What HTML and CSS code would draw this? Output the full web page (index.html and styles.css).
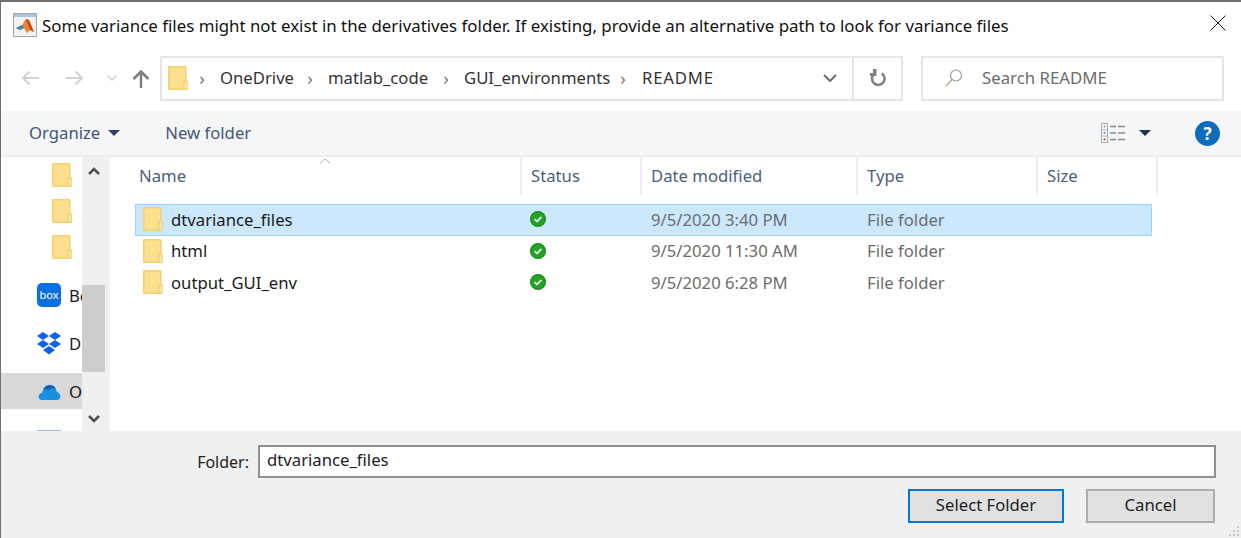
FILE: index.html
```html
<!DOCTYPE html>
<html lang="en">
<head>
    <meta charset="UTF-8">
    <title>Select Folder</title>
    <link rel="stylesheet" href="styles.css">
</head>
<body>
    <svg class="defs" width="0" height="0">
        <symbol id="folder" viewBox="0 0 20 24">
            <rect x="0.75" y="0.75" width="17" height="22.5" rx="0.5" fill="#fde08f" stroke="#f5cf6b" stroke-width="1.5"/>
            <rect x="16" y="15" width="3.2" height="8.2" fill="#fde9ad" stroke="#f0c95f"/>
        </symbol>
        <symbol id="ok" viewBox="0 0 16 16">
            <circle cx="8" cy="8" r="8" fill="#25a325"/>
            <circle cx="8" cy="8" r="7.2" fill="none" stroke="#1a8a1f" stroke-width="1"/>
            <path d="M4.6 8.2 7 10.4 11.4 6" fill="none" stroke="#fff" stroke-width="1.6"/>
        </symbol>
    </svg>

    <div class="window">
        <div class="titlebar">
            <svg class="app-icon" width="24" height="24" viewBox="0 0 24 24">
                <rect x="0.5" y="0.5" width="23" height="23" fill="#f2f2f2" stroke="#a6a6a6"/>
                <rect x="1" y="1" width="22" height="3" fill="#a9c4e0"/>
                <path d="M3 15 9 12 13 6 16 7 21 19 17 17 14 20 11 15 7 17Z" fill="#e8832a"/>
                <path d="M3 15 9 12 11 15 7 17Z" fill="#3f86c8"/>
                <path d="M13 6 16 7 21 19 17 17Z" fill="#c9491f"/>
            </svg>
            <span class="title">Some variance files might not exist in the derivatives folder. If existing, provide an alternative path to look for variance files</span>
            <svg class="close" width="16" height="16" viewBox="0 0 16 16">
                <path d="M0.5 0.5 15.5 15.5M15.5 0.5 0.5 15.5" stroke="#1a1a1a" stroke-width="1" fill="none"/>
            </svg>
        </div>

        <div class="navbar">
            <div class="nav-buttons">
                <svg class="nav-back" width="18" height="16" viewBox="0 0 18 16"><path d="M18 8H2M8.500 1.500 2 8l6.500 6.500" fill="none" stroke="#d2d2d2" stroke-width="2"/></svg>
                <svg class="nav-fwd" width="18" height="16" viewBox="0 0 18 16"><path d="M0 8h16M9.500 1.500 16 8l-6.500 6.500" fill="none" stroke="#d2d2d2" stroke-width="2"/></svg>
                <svg class="nav-down" width="10" height="6" viewBox="0 0 10 6"><path d="M0.500 0.500 5 5 9.500 0.500" fill="none" stroke="#d2d2d2" stroke-width="1.500"/></svg>
                <svg class="nav-up" width="18" height="18" viewBox="0 0 18 18"><path d="M9 18V2M1.500 9 9 1.500 16.500 9" fill="none" stroke="#7f7f7f" stroke-width="2.500"/></svg>
            </div>
            <div class="address">
                <svg class="addr-folder" width="20" height="24"><use href="#folder"/></svg>
                <span class="crumb-sep first">›</span><span class="crumb c1">OneDrive</span>
                <span class="crumb-sep">›</span><span class="crumb c2">matlab_code</span>
                <span class="crumb-sep">›</span><span class="crumb c3">GUI_environments</span>
                <span class="crumb-sep">›</span><span class="crumb c4">README</span>
                <svg class="addr-chevron" width="14" height="8" viewBox="0 0 14 8"><path d="M1 1 7 7 13 1" fill="none" stroke="#6f6f6f" stroke-width="2"/></svg>
                <div class="addr-refresh">
                    <svg width="16" height="18" viewBox="0 0 16 18"><path d="M4 5A6.300 6.300 0 1 0 11.800 4.400" fill="none" stroke="#808080" stroke-width="2.500"/><path d="M3 0H6.500V7H0V4H3Z" fill="#808080"/></svg>
                </div>
            </div>
            <div class="search">
                <svg width="20" height="20" viewBox="0 0 20 20"><circle cx="12" cy="7.500" r="5.500" fill="none" stroke="#9a9a9a" stroke-width="1.200"/><path d="M8 11.500 2 18" stroke="#c8a58e" stroke-width="1.500"/></svg>
                <span>Search README</span>
            </div>
        </div>

        <div class="commandbar">
            <span class="cmd">Organize</span>
            <span class="caret"></span>
            <span class="cmd new-folder">New folder</span>
            <svg class="view-icon" width="25" height="20" viewBox="0 0 25 20">
                <rect x="0.500" y="0.500" width="6" height="19" fill="#fff" stroke="#a8a8a8"/>
                <path d="M1 7H6M1 13H6" stroke="#a8a8a8"/>
                <rect x="2.500" y="2.500" width="2" height="2" fill="#9a9a9a"/>
                <rect x="2.500" y="9" width="2" height="2" fill="#4a9be8"/>
                <rect x="2.500" y="15.500" width="2" height="2" fill="#e0483c"/>
                <path d="M9 3.500h6M17 3.500h7M9 10h6M17 10h7M9 16.500h6M17 16.500h7" stroke="#8a8a8a" stroke-width="1.500"/>
            </svg>
            <span class="caret dark"></span>
            <span class="help">?</span>
        </div>

        <div class="main">
            <div class="sidebar">
                <div class="side-items">
                    <div class="side-item"><svg width="20" height="24"><use href="#folder"/></svg></div>
                    <div class="side-item"><svg width="20" height="24"><use href="#folder"/></svg></div>
                    <div class="side-item gap-after"><svg width="20" height="24"><use href="#folder"/></svg></div>
                    <div class="side-item gap-after service">
                        <svg width="24" height="24" viewBox="0 0 24 24"><rect width="24" height="24" rx="5" fill="#0a6fe0"/><text x="12" y="16" class="box-logo">box</text></svg>
                        <span>Be</span>
                    </div>
                    <div class="side-item gap-after service">
                        <svg width="24" height="24" viewBox="0 0 24 24"><path d="M6 1 12 5 6 9 0 5ZM18 1 24 5 18 9 12 5ZM6 9 12 13 6 17 0 13ZM18 9 24 13 18 17 12 13ZM12 15 18 19 12 23.500 6 19Z" fill="#0b62f0"/></svg>
                        <span>D</span>
                    </div>
                    <div class="side-item gap-after service active">
                        <svg width="24" height="18" viewBox="0 0 24 18"><path d="M6 8A7 7 0 0 1 19 7L12 12Z" fill="#0c5fb0"/><path d="M5 18H20C24 18 25 12 20 10L19 7C16 5 13 6 12 8 9 6 5 8 5 11 1 11 0 18 5 18Z" fill="#1a8fe0"/></svg>
                        <span>O</span>
                    </div>
                    <div class="side-item service">
                        <svg width="24" height="18" viewBox="0 0 24 18"><rect width="24" height="18" fill="#dbe9f7" stroke="#6f9ac6"/></svg>
                    </div>
                </div>
                <div class="scrollbar">
                    <svg width="12" height="8" viewBox="0 0 12 8"><path d="M1 7 6 2 11 7" fill="none" stroke="#505050" stroke-width="2.500"/></svg>
                    <div class="scroll-track"><div class="scroll-thumb"></div></div>
                    <svg width="12" height="8" viewBox="0 0 12 8"><path d="M1 1 6 6 11 1" fill="none" stroke="#505050" stroke-width="2.500"/></svg>
                </div>
            </div>

            <div class="files">
                <div class="file-head">
                    <div class="col-head name-head">Name<svg class="sort" width="12" height="6" viewBox="0 0 12 6"><path d="M1 5.500 6 1 11 5.500" fill="none" stroke="#b0b0b0"/></svg></div>
                    <div class="col-head">Status</div>
                    <div class="col-head">Date modified</div>
                    <div class="col-head">Type</div>
                    <div class="col-head">Size</div>
                </div>
                <div class="file-row selected">
                    <div class="file-name"><svg width="20" height="24"><use href="#folder"/></svg>dtvariance_files</div>
                    <div class="file-status"><svg width="16" height="16"><use href="#ok"/></svg></div>
                    <div class="file-meta">9/5/2020 3:40 PM</div>
                    <div class="file-meta">File folder</div>
                </div>
                <div class="file-row">
                    <div class="file-name"><svg width="20" height="24"><use href="#folder"/></svg>html</div>
                    <div class="file-status"><svg width="16" height="16"><use href="#ok"/></svg></div>
                    <div class="file-meta">9/5/2020 11:30 AM</div>
                    <div class="file-meta">File folder</div>
                </div>
                <div class="file-row">
                    <div class="file-name"><svg width="20" height="24"><use href="#folder"/></svg>output_GUI_env</div>
                    <div class="file-status"><svg width="16" height="16"><use href="#ok"/></svg></div>
                    <div class="file-meta">9/5/2020 6:28 PM</div>
                    <div class="file-meta">File folder</div>
                </div>
            </div>
        </div>

        <div class="footer">
            <div class="folder-row">
                <label class="folder-label">Folder:</label>
                <div class="folder-input">dtvariance_files</div>
            </div>
            <div class="button-row">
                <div class="btn primary">Select Folder</div>
                <div class="btn">Cancel</div>
            </div>
            <svg class="grip" width="12" height="12" viewBox="0 0 12 12"><path d="M9 1h2v2H9zM5 5h2v2H5zM9 5h2v2H9zM1 9h2v2H1zM5 9h2v2H5zM9 9h2v2H9z" fill="#c8c8c8"/></svg>
        </div>
    </div>
</body>
</html>
```

FILE: styles.css
```css
* {
    box-sizing: border-box;
}
html, body {
    margin: 0;
    height: 100%;
    overflow: hidden;
}
body {
    font-family: "Noto Sans", "Open Sans", sans-serif;
    font-size: 16.7px;
    color: #1a1a1a;
    background: #fff;
}
.defs {
    position: absolute;
}
svg {
    display: block;
    flex: none;
}
.window {
    width: 1241px;
    height: 538px;
    border-top: 2px solid #707070;
    border-left: 1px solid #707070;
    display: flex;
    flex-direction: column;
}

/* title */
.titlebar {
    height: 38px;
    display: flex;
    align-items: center;
    padding-left: 12px;
    padding-top: 8px;
}
.title {
    margin-left: 5px;
    font-size: 16.85px;
    color: #111;
    white-space: nowrap;
}
.close {
    margin-left: auto;
    margin-right: 15px;
    margin-top: -4px;
}

/* nav */
.navbar {
    height: 71px;
    display: flex;
    align-items: center;
    padding-top: 5px;
}
.nav-buttons {
    width: 159px;
    display: flex;
    align-items: center;
    padding-left: 20px;
}
.nav-fwd {
    margin-left: 27px;
}
.nav-down {
    margin-left: 23px;
}
.nav-up {
    margin-left: 15px;
    margin-top: 2px;
}
.address {
    width: 743px;
    height: 45px;
    border: 2px solid #e6e6e6;
    display: flex;
    align-items: center;
    padding-left: 6px;
    color: #333;
}
.addr-folder {
    margin-right: 5px;
}
.crumb-sep {
    color: #777;
    font-size: 18px;
    width: 18px;
    text-align: center;
}
.crumb {
    white-space: nowrap;
    margin-left: 9px;
    padding-bottom: 2px;
}
.c1 { width: 81px; }
.c2 { width: 109px; }
.c3 { width: 150px; }
.c4 {
    margin-left: 10px;
    letter-spacing: 0.8px;
}
.addr-chevron {
    margin-left: auto;
    margin-right: 15px;
}
.addr-refresh {
    width: 49px;
    height: 100%;
    border-left: 2px solid #e6e6e6;
    display: flex;
    align-items: center;
    justify-content: center;
}
.search {
    width: 303px;
    height: 45px;
    margin-left: 18px;
    border: 2px solid #e6e6e6;
    display: flex;
    align-items: center;
    padding-left: 21px;
    color: #6d6d6d;
    font-size: 16.8px;
}
.search span {
    margin-left: 18px;
    padding-bottom: 2px;
}

/* commands */
.commandbar {
    height: 46px;
    background: #f5f6f7;
    border-bottom: 2px solid #eceded;
    display: flex;
    align-items: center;
    padding-left: 28px;
    color: #42567a;
}
.cmd {
    padding-bottom: 2px;
}
.caret {
    width: 0;
    height: 0;
    margin-left: 8px;
    border-left: 6px solid transparent;
    border-right: 6px solid transparent;
    border-top: 6px solid #33415f;
}
.new-folder {
    margin-left: 45px;
}
.view-icon {
    margin-left: auto;
}
.caret.dark {
    margin-left: 13px;
    border-top-color: #1f3150;
}
.help {
    width: 25px;
    height: 25px;
    margin-left: 44px;
    margin-right: 21px;
    border-radius: 50%;
    background: #0f6cbd;
    color: #fff;
    font-weight: 700;
    font-size: 17px;
    line-height: 25px;
    text-align: center;
}

/* sidebar and list */
.main {
    flex: 1;
    display: flex;
    min-height: 0;
}
.sidebar {
    width: 109px;
    display: flex;
    border-right: 2px solid #f3f3f3;
    overflow: hidden;
}
.side-items {
    width: 81px;
    overflow: hidden;
}
.side-item {
    height: 36px;
    display: flex;
    align-items: center;
    padding-left: 51px;
    flex: none;
}
.side-item.gap-after {
    margin-bottom: 12px;
}
.side-item.service {
    padding-left: 36px;
    gap: 8px;
}
.side-item.service span {
    white-space: nowrap;
}
.side-item.active {
    background: #d9d9d9;
}
.box-logo {
    fill: #fff;
    font-size: 11px;
    text-anchor: middle;
}
.scrollbar {
    width: 26px;
    background: #f0f0f0;
    display: flex;
    flex-direction: column;
    align-items: center;
    padding: 10px 2px 8px 0;
}
.scroll-track {
    flex: 1;
    width: 100%;
    padding-top: 110px;
}
.scroll-thumb {
    height: 87px;
    width: 23px;
    background: #cdcdcd;
}
.files {
    flex: 1;
    padding-left: 25px;
    overflow: hidden;
}
.file-head {
    display: grid;
    grid-template-columns: 387px 120px 216px 180px 120px;
    height: 38px;
    margin-bottom: 9px;
    color: #4c607a;
}
.file-row {
    display: grid;
    grid-template-columns: 386px 120px 216px 180px 113px;
    height: 32px;
    width: 1017px;
    align-items: center;
    border: 1px solid transparent;
    padding-bottom: 2px;
}
.file-row.selected {
    background: #cce8ff;
    border-color: #99d1ff;
}
.file-row.selected + .file-row {
    height: 31px;
}
.col-head {
    border-right: 2px solid #eeeeee;
    padding-left: 9px;
    line-height: 38px;
    position: relative;
}
.name-head {
    padding-left: 4px;
}
.sort {
    position: absolute;
    left: 184px;
    top: 1px;
}
.file-name {
    display: flex;
    align-items: center;
    gap: 8px;
    padding-left: 7px;
}
.file-status {
    padding-left: 8px;
}
.file-meta {
    padding-left: 9px;
    color: #6d6d6d;
}

/* footer */
.footer {
    height: 107px;
    background: #f0f0f0;
    position: relative;
    padding: 14px 25px 0 0;
}
.folder-row {
    display: flex;
    align-items: center;
    justify-content: flex-end;
}
.folder-label {
    font-size: 16px;
    margin-right: 9px;
    color: #222;
}
.folder-input {
    width: 958px;
    height: 33px;
    border: 2px solid #8f8f8f;
    background: #fff;
    padding-left: 7px;
    line-height: 26px;
    color: #222;
}
.button-row {
    display: flex;
    justify-content: flex-end;
    gap: 22px;
    margin-top: 11px;
    padding-right: 1px;
}
.btn {
    width: 129px;
    height: 34px;
    background: #e1e1e1;
    border: 2px solid #adadad;
    text-align: center;
    line-height: 28px;
    color: #222;
}
.btn.primary {
    width: 156px;
    border-color: #0078d7;
}
.grip {
    position: absolute;
    right: 1px;
    bottom: 1px;
}
```
